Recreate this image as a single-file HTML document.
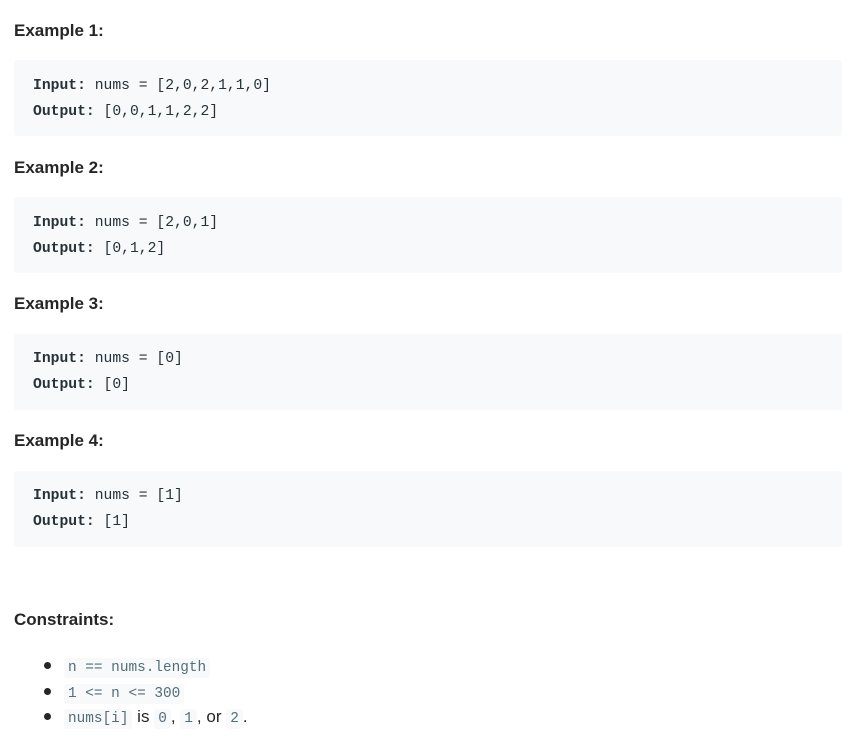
<!DOCTYPE html>
<html><head><style>
body{margin:0;background:#fff;font-family:"Liberation Sans",sans-serif;color:#262626;}
h4{position:absolute;left:14px;margin:0;font-size:17px;font-weight:bold;line-height:20px;color:#262626}
.pre{position:absolute;left:14px;width:828px;height:76px;background:#f7f9fa;border-radius:3px;font-family:"Liberation Mono",monospace;font-size:14.7px;color:#263238;}
.pre div{position:absolute;left:19px;line-height:20px}
.pre b{font-weight:bold}
ul{position:absolute;left:0;top:653px;margin:0;padding-left:40px;font-size:17px;list-style:none}
li{position:relative;padding-left:24px;height:25.5px;line-height:25.5px}
li:before{content:"";position:absolute;left:4px;top:9px;width:7px;height:7px;border-radius:50%;background:#262626}
code{font-family:"Liberation Mono",monospace;font-size:14.4px;background:#f7f9fa;color:#546e7a;padding:2px 4px;border-radius:3px;line-height:20px}
</style></head><body>
<h4 style="top:21px">Example 1:</h4>
<div class="pre" style="top:60px"><div style="top:16px"><b>Input:</b> nums = [2,0,2,1,1,0]</div><div style="top:42px"><b>Output:</b> [0,0,1,1,2,2]</div></div>
<h4 style="top:158px">Example 2:</h4>
<div class="pre" style="top:197px"><div style="top:16px"><b>Input:</b> nums = [2,0,1]</div><div style="top:42px"><b>Output:</b> [0,1,2]</div></div>
<h4 style="top:294px">Example 3:</h4>
<div class="pre" style="top:334px"><div style="top:15px"><b>Input:</b> nums = [0]</div><div style="top:41px"><b>Output:</b> [0]</div></div>
<h4 style="top:431px">Example 4:</h4>
<div class="pre" style="top:471px"><div style="top:15px"><b>Input:</b> nums = [1]</div><div style="top:41px"><b>Output:</b> [1]</div></div>
<h4 style="top:610px">Constraints:</h4>
<ul>
<li><code>n == nums.length</code></li>
<li><code>1 &lt;= n &lt;= 300</code></li>
<li><code>nums[i]</code> is <code>0</code>, <code>1</code>, or <code>2</code>.</li>
</ul>
</body></html>
